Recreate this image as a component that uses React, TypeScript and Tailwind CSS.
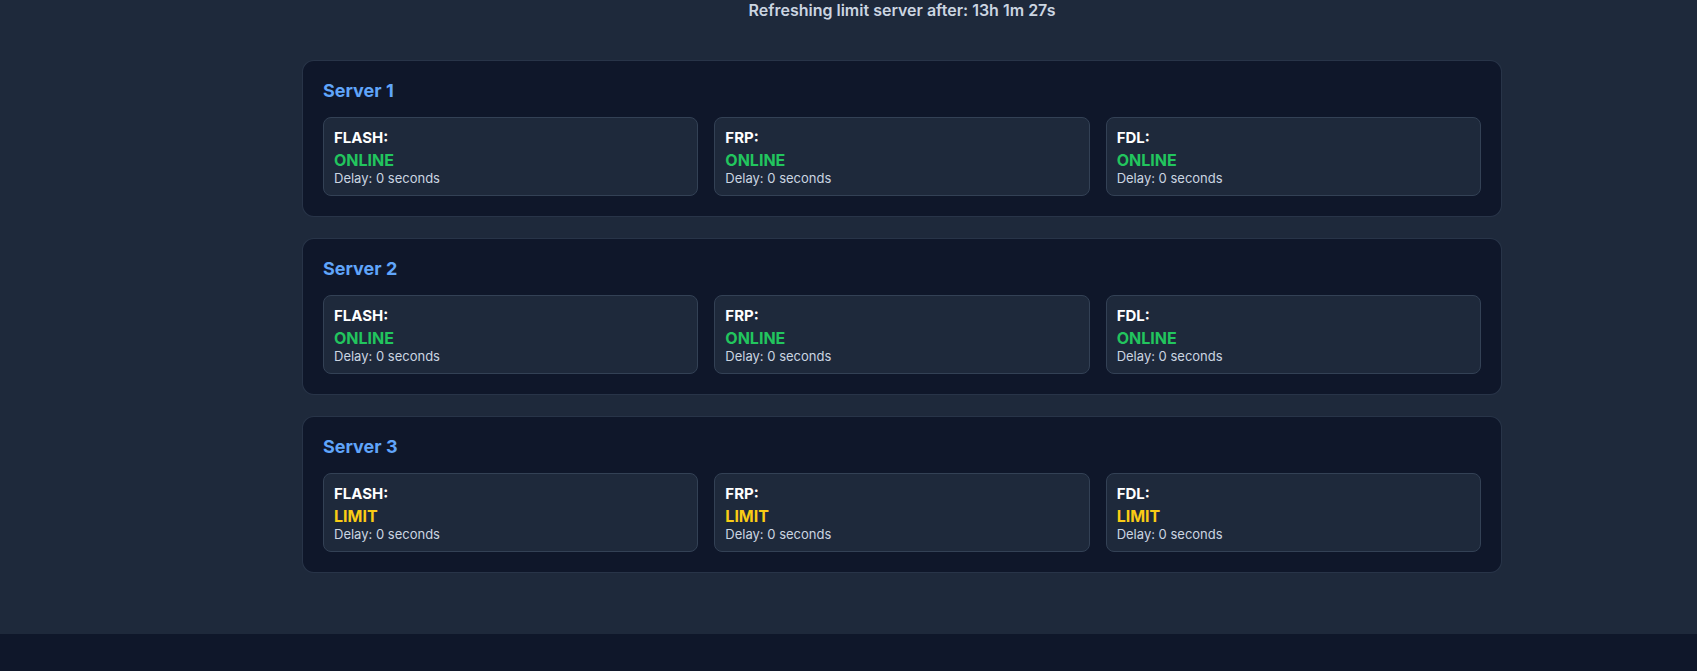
import React from 'react';

type Status = 'ONLINE' | 'LIMIT';

interface Service {
  name: string;
  status: Status;
  delay: number;
}

interface Server {
  title: string;
  services: Service[];
}

const servers: Server[] = [
  {
    title: 'Server 1',
    services: [
      { name: 'FLASH', status: 'ONLINE', delay: 0 },
      { name: 'FRP', status: 'ONLINE', delay: 0 },
      { name: 'FDL', status: 'ONLINE', delay: 0 },
    ],
  },
  {
    title: 'Server 2',
    services: [
      { name: 'FLASH', status: 'ONLINE', delay: 0 },
      { name: 'FRP', status: 'ONLINE', delay: 0 },
      { name: 'FDL', status: 'ONLINE', delay: 0 },
    ],
  },
  {
    title: 'Server 3',
    services: [
      { name: 'FLASH', status: 'LIMIT', delay: 0 },
      { name: 'FRP', status: 'LIMIT', delay: 0 },
      { name: 'FDL', status: 'LIMIT', delay: 0 },
    ],
  },
];

const ServiceBox: React.FC<{ service: Service }> = ({ service }) => (
  <div className="bg-[#1e293b] border border-[#334155] rounded-lg px-2.5 pt-2.5 pb-[9px]">
    <div className="text-[15px] font-bold text-white leading-5 mb-[2px]">{service.name}:</div>
    <div
      className={
        service.status === 'ONLINE'
          ? 'text-base font-bold leading-5 text-[#22c55e]'
          : 'text-base font-bold leading-5 text-[#facc15]'
      }
    >
      {service.status}
    </div>
    <div className="text-[13px] leading-4 text-[#cbd5e1]">Delay: {service.delay} seconds</div>
  </div>
);

const ServerCard: React.FC<{ server: Server }> = ({ server }) => (
  <div className="bg-[#0f172a] border border-[#334155]/70 rounded-xl p-5">
    <h2 className="text-lg font-bold text-[#60a5fa] leading-5 mb-4">{server.title}</h2>
    <div className="grid grid-cols-3 gap-4">
      {server.services.map((s) => (
        <ServiceBox key={s.name} service={s} />
      ))}
    </div>
  </div>
);

export default function App() {
  return (
    <div className="min-h-screen bg-[#0f172a] flex flex-col" style={{ fontFamily: 'Inter, "Noto Sans", sans-serif' }}>
      <main className="bg-[#1e293b] pl-[107px] pb-[61px]">
        <p className="text-center text-base font-semibold leading-5 text-[#cbd5e1]">
          Refreshing limit server after: 13h 1m 27s
        </p>
        <div className="max-w-[1200px] mx-auto mt-10 flex flex-col gap-[21px]">
          {servers.map((srv) => (
            <ServerCard key={srv.title} server={srv} />
          ))}
        </div>
      </main>
      <footer className="flex-1 bg-[#0f172a]" />
    </div>
  );
}
